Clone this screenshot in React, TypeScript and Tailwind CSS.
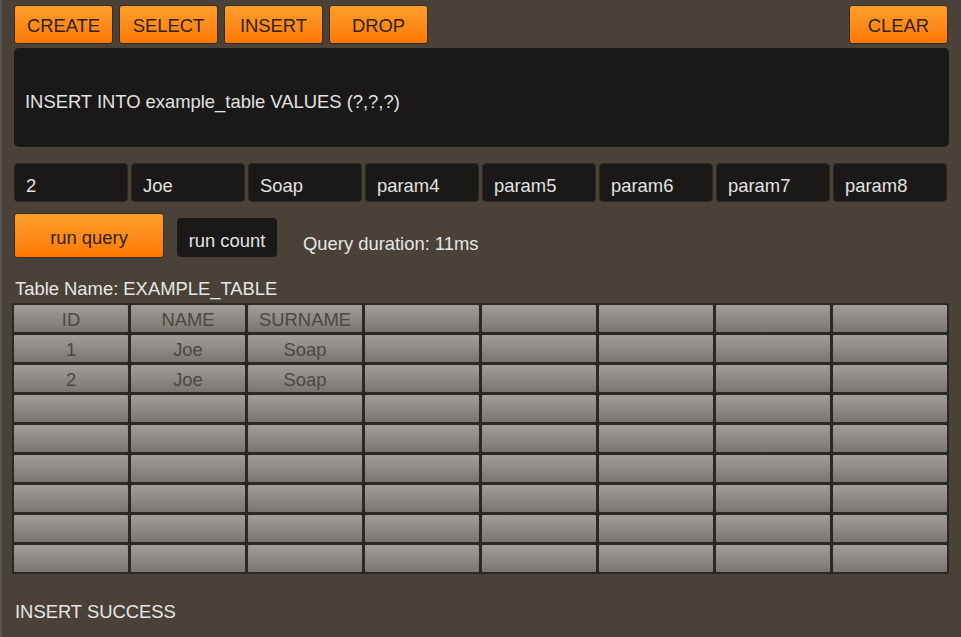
import React from "react";

const font = { fontFamily: '"Liberation Sans", Arial, sans-serif' };

function OrangeBtn({ label, className = "" }: { label: string; className?: string }) {
  return (
    <div
      className={`flex items-center justify-center rounded-[3px] border border-[#3a2c18] bg-gradient-to-b from-[#ff9e2a] to-[#ff7800] text-[18.4px] text-[#2e2318] ${className}`}
    >
      {label}
    </div>
  );
}

const params = ["2", "Joe", "Soap", "param4", "param5", "param6", "param7", "param8"];
const rows: string[][] = [
  ["ID", "NAME", "SURNAME", "", "", "", "", ""],
  ["1", "Joe", "Soap", "", "", "", "", ""],
  ["2", "Joe", "Soap", "", "", "", "", ""],
  ...Array.from({ length: 6 }, () => ["", "", "", "", "", "", "", ""]),
];

export default function App() {
  return (
    <div
      style={font}
      className="w-[961px] h-[637px] overflow-hidden bg-[#4a4238] border-l-2 border-[#5a5650] flex flex-col"
    >
      {/* Top buttons */}
      <div className="flex pt-[5px] pl-[12px] pr-[13px] gap-[6px]">
        <OrangeBtn label="CREATE" className="w-[99px] h-[39px] pt-[2px]" />
        <OrangeBtn label="SELECT" className="w-[99px] h-[39px] pt-[2px]" />
        <OrangeBtn label="INSERT" className="w-[99px] h-[39px] pt-[2px]" />
        <OrangeBtn label="DROP" className="w-[99px] h-[39px] pt-[2px]" />
        <OrangeBtn label="CLEAR" className="w-[99px] h-[39px] pt-[2px] ml-auto" />
      </div>

      {/* Query text */}
      <div className="mt-[4px] ml-[12px] w-[935px] h-[99px] rounded-[5px] bg-[#1a1917] flex items-center pl-[11px] pt-[9px] text-[18.4px] text-[#e2e2e2]">
        INSERT INTO example_table VALUES (?,?,?)
      </div>

      {/* Params */}
      <div className="mt-[16px] ml-[12px] flex gap-[3px]">
        {params.map((p, i) => (
          <div
            key={i}
            className="w-[114px] h-[39px] rounded-[4px] bg-[#1a1917] border border-[#2c2822] flex items-center pl-[11px] pt-[6px] text-[18.4px] text-[#e2e2e2]"
          >
            {p}
          </div>
        ))}
      </div>

      {/* Run row */}
      <div className="mt-[11px] ml-[12px] flex items-start">
        <OrangeBtn label="run query" className="w-[150px] h-[45px] pt-[4px]" />
        <div className="ml-[13px] mt-[5px] w-[100px] h-[39px] rounded-[4px] bg-[#1a1917] flex items-center justify-center pt-[6px] text-[18.4px] text-[#e2e2e2]">
          run count
        </div>
        <div className="ml-[26px] mt-[20px] text-[18.4px] leading-[21px] text-[#e6e6e6]">
          Query duration: 11ms
        </div>
      </div>

      {/* Table name */}
      <div className="mt-[20px] ml-[13px] text-[18.4px] leading-[21px] text-[#e6e6e6]">
        Table Name: EXAMPLE_TABLE
      </div>

      {/* Table */}
      <div className="mt-[4px] ml-[10px] w-[937px] grid grid-cols-8 gap-[1px] bg-[#2a2825] p-[1px] rounded-[2px]">
        {rows.flat().map((c, i) => (
          <div
            key={i}
            className="h-[29px] rounded-[2px] border border-[#2b2a27] bg-gradient-to-b from-[#a29d98] to-[#7b7671] flex items-center justify-center pt-[2px] text-[18.4px] text-[#4d4843]"
          >
            {c}
          </div>
        ))}
      </div>

      {/* Status */}
      <div className="mt-[27px] ml-[13px] text-[18.4px] leading-[21px] text-[#e6e6e6]">
        INSERT SUCCESS
      </div>
    </div>
  );
}
